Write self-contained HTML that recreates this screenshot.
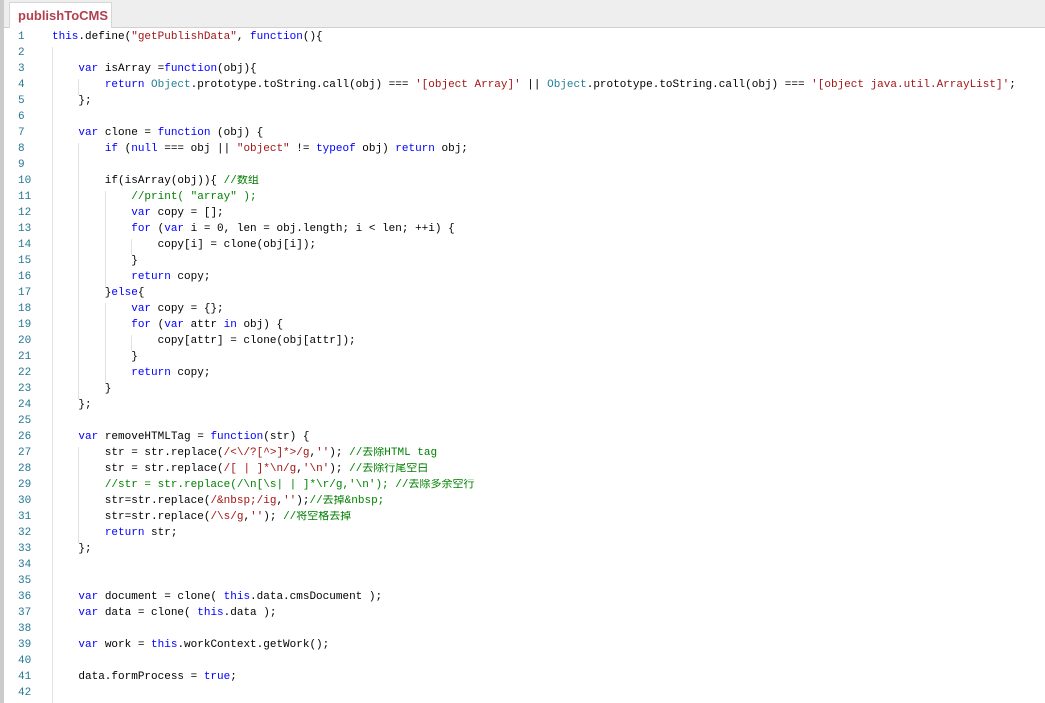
<!DOCTYPE html>
<html><head><meta charset="utf-8">
<style>
html,body{margin:0;padding:0;width:1045px;height:703px;overflow:hidden;background:#fff;}
#left{position:absolute;left:0;top:0;width:4px;height:703px;background:#cbcbcb;}
#bar{position:absolute;left:4px;top:0;width:1041px;height:27px;background:#eeeeee;border-bottom:1px solid #d0d0d0;}
#tab{position:absolute;left:5px;top:2px;width:103px;height:26px;background:#fff;border:1px solid #d6d6d6;border-bottom:none;box-sizing:border-box;font:bold 13px "Liberation Sans",sans-serif;color:#b0404f;padding:5px 0 0 8px;}
#code{position:absolute;left:0;top:31px;width:1045px;}
.l{position:relative;height:16px;line-height:16px;overflow:hidden;font:11px "Liberation Mono","Noto Sans CJK SC",monospace;white-space:pre;color:#000;}
.n{position:absolute;left:18px;top:0;color:#237893;font-family:"Liberation Mono",monospace;}
.t{position:absolute;left:52px;top:-2px;height:18px;line-height:16px;}
.t span{line-height:11px;}
.g{position:absolute;top:0;width:1px;height:16px;background:#e2e2e2;}
.k{color:#0000ff}.s{color:#a31515}.c{color:#008000}.o{color:#267f99}
</style></head><body>
<div id="left"></div>
<div id="bar"><div id="tab">publishToCMS</div></div>
<div id="code">
<div class="l"><span class="n">1</span><span class="t"><span class="k">this</span>.define(<span class="s">"getPublishData"</span>, <span class="k">function</span>(){</span></div>
<div class="l"><span class="n">2</span><i class="g" style="left:52px"></i></div>
<div class="l"><span class="n">3</span><i class="g" style="left:52px"></i><span class="t">    <span class="k">var</span> isArray =<span class="k">function</span>(obj){</span></div>
<div class="l"><span class="n">4</span><i class="g" style="left:52px"></i><i class="g" style="left:78px"></i><span class="t">        <span class="k">return</span> <span class="o">Object</span>.prototype.toString.call(obj) === <span class="s">'[object Array]'</span> || <span class="o">Object</span>.prototype.toString.call(obj) === <span class="s">'[object java.util.ArrayList]'</span>;</span></div>
<div class="l"><span class="n">5</span><i class="g" style="left:52px"></i><span class="t">    };</span></div>
<div class="l"><span class="n">6</span><i class="g" style="left:52px"></i></div>
<div class="l"><span class="n">7</span><i class="g" style="left:52px"></i><span class="t">    <span class="k">var</span> clone = <span class="k">function</span> (obj) {</span></div>
<div class="l"><span class="n">8</span><i class="g" style="left:52px"></i><i class="g" style="left:78px"></i><span class="t">        <span class="k">if</span> (<span class="k">null</span> === obj || <span class="s">"object"</span> != <span class="k">typeof</span> obj) <span class="k">return</span> obj;</span></div>
<div class="l"><span class="n">9</span><i class="g" style="left:52px"></i><i class="g" style="left:78px"></i></div>
<div class="l"><span class="n">10</span><i class="g" style="left:52px"></i><i class="g" style="left:78px"></i><span class="t">        if(isArray(obj)){ <span class="c">//数组</span></span></div>
<div class="l"><span class="n">11</span><i class="g" style="left:52px"></i><i class="g" style="left:78px"></i><i class="g" style="left:105px"></i><span class="t">            <span class="c">//print( "array" );</span></span></div>
<div class="l"><span class="n">12</span><i class="g" style="left:52px"></i><i class="g" style="left:78px"></i><i class="g" style="left:105px"></i><span class="t">            <span class="k">var</span> copy = [];</span></div>
<div class="l"><span class="n">13</span><i class="g" style="left:52px"></i><i class="g" style="left:78px"></i><i class="g" style="left:105px"></i><span class="t">            <span class="k">for</span> (<span class="k">var</span> i = 0, len = obj.length; i &lt; len; ++i) {</span></div>
<div class="l"><span class="n">14</span><i class="g" style="left:52px"></i><i class="g" style="left:78px"></i><i class="g" style="left:105px"></i><i class="g" style="left:131px"></i><span class="t">                copy[i] = clone(obj[i]);</span></div>
<div class="l"><span class="n">15</span><i class="g" style="left:52px"></i><i class="g" style="left:78px"></i><i class="g" style="left:105px"></i><span class="t">            }</span></div>
<div class="l"><span class="n">16</span><i class="g" style="left:52px"></i><i class="g" style="left:78px"></i><i class="g" style="left:105px"></i><span class="t">            <span class="k">return</span> copy;</span></div>
<div class="l"><span class="n">17</span><i class="g" style="left:52px"></i><i class="g" style="left:78px"></i><span class="t">        }<span class="k">else</span>{</span></div>
<div class="l"><span class="n">18</span><i class="g" style="left:52px"></i><i class="g" style="left:78px"></i><i class="g" style="left:105px"></i><span class="t">            <span class="k">var</span> copy = {};</span></div>
<div class="l"><span class="n">19</span><i class="g" style="left:52px"></i><i class="g" style="left:78px"></i><i class="g" style="left:105px"></i><span class="t">            <span class="k">for</span> (<span class="k">var</span> attr <span class="k">in</span> obj) {</span></div>
<div class="l"><span class="n">20</span><i class="g" style="left:52px"></i><i class="g" style="left:78px"></i><i class="g" style="left:105px"></i><i class="g" style="left:131px"></i><span class="t">                copy[attr] = clone(obj[attr]);</span></div>
<div class="l"><span class="n">21</span><i class="g" style="left:52px"></i><i class="g" style="left:78px"></i><i class="g" style="left:105px"></i><span class="t">            }</span></div>
<div class="l"><span class="n">22</span><i class="g" style="left:52px"></i><i class="g" style="left:78px"></i><i class="g" style="left:105px"></i><span class="t">            <span class="k">return</span> copy;</span></div>
<div class="l"><span class="n">23</span><i class="g" style="left:52px"></i><i class="g" style="left:78px"></i><span class="t">        }</span></div>
<div class="l"><span class="n">24</span><i class="g" style="left:52px"></i><span class="t">    };</span></div>
<div class="l"><span class="n">25</span><i class="g" style="left:52px"></i></div>
<div class="l"><span class="n">26</span><i class="g" style="left:52px"></i><span class="t">    <span class="k">var</span> removeHTMLTag = <span class="k">function</span>(str) {</span></div>
<div class="l"><span class="n">27</span><i class="g" style="left:52px"></i><i class="g" style="left:78px"></i><span class="t">        str = str.replace(<span class="s">/&lt;\/?[^&gt;]*&gt;/g</span>,<span class="s">''</span>); <span class="c">//去除HTML tag</span></span></div>
<div class="l"><span class="n">28</span><i class="g" style="left:52px"></i><i class="g" style="left:78px"></i><span class="t">        str = str.replace(<span class="s">/[ | ]*\n/g</span>,<span class="s">'\n'</span>); <span class="c">//去除行尾空白</span></span></div>
<div class="l"><span class="n">29</span><i class="g" style="left:52px"></i><i class="g" style="left:78px"></i><span class="t">        <span class="c">//str = str.replace(/\n[\s| | ]*\r/g,'\n'); //去除多余空行</span></span></div>
<div class="l"><span class="n">30</span><i class="g" style="left:52px"></i><i class="g" style="left:78px"></i><span class="t">        str=str.replace(<span class="s">/&amp;nbsp;/ig</span>,<span class="s">''</span>);<span class="c">//去掉&amp;nbsp;</span></span></div>
<div class="l"><span class="n">31</span><i class="g" style="left:52px"></i><i class="g" style="left:78px"></i><span class="t">        str=str.replace(<span class="s">/\s/g</span>,<span class="s">''</span>); <span class="c">//将空格去掉</span></span></div>
<div class="l"><span class="n">32</span><i class="g" style="left:52px"></i><i class="g" style="left:78px"></i><span class="t">        <span class="k">return</span> str;</span></div>
<div class="l"><span class="n">33</span><i class="g" style="left:52px"></i><span class="t">    };</span></div>
<div class="l"><span class="n">34</span><i class="g" style="left:52px"></i></div>
<div class="l"><span class="n">35</span><i class="g" style="left:52px"></i></div>
<div class="l"><span class="n">36</span><i class="g" style="left:52px"></i><span class="t">    <span class="k">var</span> document = clone( <span class="k">this</span>.data.cmsDocument );</span></div>
<div class="l"><span class="n">37</span><i class="g" style="left:52px"></i><span class="t">    <span class="k">var</span> data = clone( <span class="k">this</span>.data );</span></div>
<div class="l"><span class="n">38</span><i class="g" style="left:52px"></i></div>
<div class="l"><span class="n">39</span><i class="g" style="left:52px"></i><span class="t">    <span class="k">var</span> work = <span class="k">this</span>.workContext.getWork();</span></div>
<div class="l"><span class="n">40</span><i class="g" style="left:52px"></i></div>
<div class="l"><span class="n">41</span><i class="g" style="left:52px"></i><span class="t">    data.formProcess = <span class="k">true</span>;</span></div>
<div class="l"><span class="n">42</span><i class="g" style="left:52px"></i></div>
</div>
</body></html>
